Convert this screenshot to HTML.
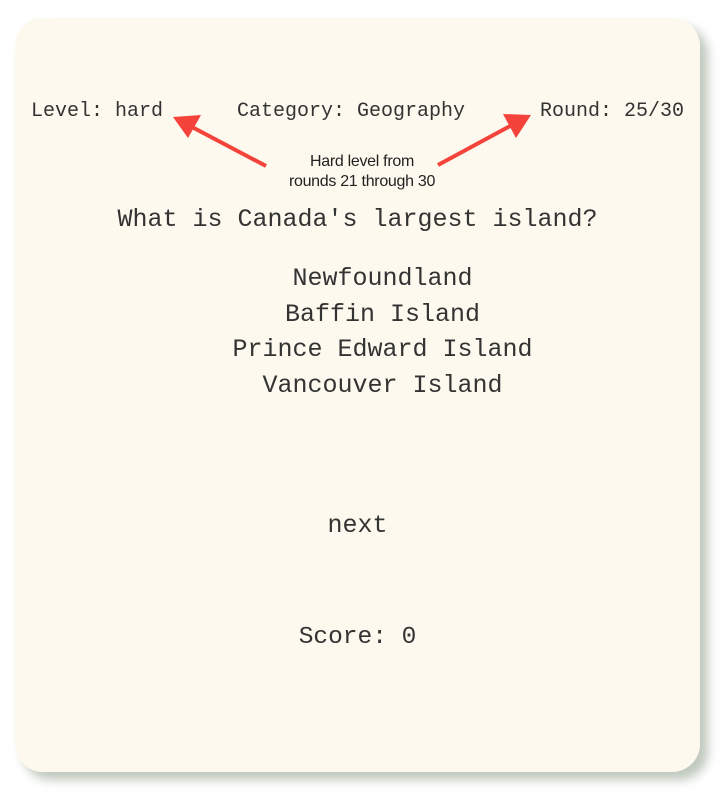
<!DOCTYPE html>
<html><head><style>
body{margin:0;width:725px;height:799px;background:#fff;position:relative;overflow:hidden;font-family:"Liberation Mono",monospace;color:#333}
.card{position:absolute;left:15px;top:18px;width:685px;height:754px;background:#fdf9ee;border-radius:28px;box-shadow:8px 8px 10px rgba(150,165,145,0.6)}
.t{position:absolute;white-space:pre;line-height:1}
.c{left:0;width:725px;text-align:center}
.note{font-family:"Liberation Sans",sans-serif;font-size:16px;color:#222;text-align:center;position:absolute;left:262px;width:200px;top:152px;line-height:20px;letter-spacing:-0.3px}
</style></head><body>
<div class="card"></div>
<div class="t" style="left:31px;top:102px;font-size:20px">Level: hard</div>
<div class="t" style="left:237px;top:102px;font-size:20px">Category: Geography</div>
<div class="t" style="left:540px;top:102px;font-size:20px">Round: 25/30</div>
<svg style="position:absolute;left:0;top:0" width="725" height="799">
<line x1="266" y1="166" x2="192" y2="127" stroke="#f4433a" stroke-width="4"/>
<polygon points="173,117 201,115 188,138" fill="#f4433a"/>
<line x1="438" y1="165" x2="512" y2="125" stroke="#f4433a" stroke-width="4"/>
<polygon points="531,115 503,114 516,138" fill="#f4433a"/>
</svg>
<div class="note">Hard level from<br>rounds 21 through 30</div>
<div class="t c" style="top:207px;font-size:25px;left:-5px">What is Canada's largest island?</div>
<div class="t c" style="top:266px;font-size:25px;left:20px">Newfoundland</div>
<div class="t c" style="top:302px;font-size:25px;left:20px">Baffin Island</div>
<div class="t c" style="top:337px;font-size:25px;left:20px">Prince Edward Island</div>
<div class="t c" style="top:373px;font-size:25px;left:20px">Vancouver Island</div>
<div class="t c" style="top:513px;font-size:25px;left:-5px">next</div>
<div class="t c" style="top:626px;font-size:24.5px;left:-5px">Score: 0</div>
</body></html>
